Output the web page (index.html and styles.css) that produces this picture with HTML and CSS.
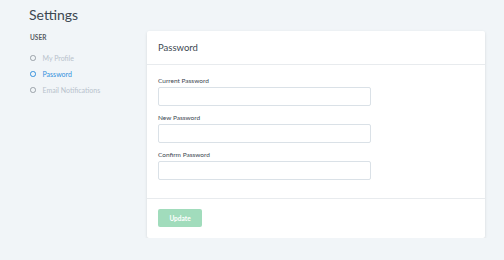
FILE: index.html
```html
<!DOCTYPE html>
<html>
<head>
<meta charset="utf-8">
<link rel="stylesheet" href="styles.css">
</head>
<body>
<div class="page">
  <aside class="sidebar">
    <h1 class="title">Settings</h1>
    <div class="section">USER</div>
    <ul class="nav">
      <li class="nav-item"><span class="radio"></span>My Profile</li>
      <li class="nav-item active"><span class="radio"></span>Password</li>
      <li class="nav-item"><span class="radio"></span>Email Notifications</li>
    </ul>
  </aside>
  <main class="card">
    <div class="card-header">Password</div>
    <div class="card-body">
      <label class="field">
        <span class="label">Current Password</span>
        <input class="input" type="password">
      </label>
      <label class="field">
        <span class="label">New Password</span>
        <input class="input" type="password">
      </label>
      <label class="field">
        <span class="label">Confirm Password</span>
        <input class="input" type="password">
      </label>
    </div>
    <div class="card-footer">
      <button class="btn">Update</button>
    </div>
  </main>
</div>
</body>
</html>
```
FILE: styles.css
```css
html, body {
  margin: 0;
  padding: 0;
  background: #f1f5f8;
  font-family: Lato, "Open Sans", sans-serif;
  color: #3d4852;
}
.page {
  display: flex;
  padding: 6px 19px 0 29px;
}
.sidebar {
  width: 118px;
  flex: none;
}
.title {
  margin: 0;
  font-size: 14px;
  font-weight: 400;
  line-height: 18px;
  color: #3d4852;
}
.section {
  margin-top: 9px;
  margin-left: 1px;
  font-size: 6.5px;
  font-weight: 700;
  color: #555b63;
  line-height: 10px;
}
.nav {
  list-style: none;
  margin: 7px 0 0;
  padding: 0;
}
.nav-item {
  display: flex;
  align-items: center;
  height: 16px;
  font-size: 7px;
  color: #b8c2cc;
}
.radio {
  width: 3.5px;
  height: 3.5px;
  border: 1.6px solid #9aa1a8;
  border-radius: 50%;
  margin: 0 7px 0 1px;
  flex: none;
}
.nav-item.active {
  color: #3490dc;
}
.nav-item.active .radio {
  border-color: #3490dc;
}
.card {
  margin-top: 25px;
  width: 338px;
  background: #fff;
  border-radius: 2px;
  box-shadow: 0 1px 3px rgba(0,0,0,0.12);
  align-self: flex-start;
}
.card-header {
  height: 33px;
  padding: 0 11px;
  display: flex;
  align-items: center;
  font-size: 9.5px;
  color: #3d4852;
  border-bottom: 1px solid #e8ebee;
}
.card-body {
  padding: 12px 11px 18px;
  display: flex;
  flex-direction: column;
  gap: 8px;
}
.field {
  display: flex;
  flex-direction: column;
  gap: 2px;
}
.label {
  font-size: 6.5px;
  line-height: 8px;
  color: #3d4852;
}
.input {
  width: 213px;
  height: 19px;
  box-sizing: border-box;
  border: 1px solid #dae1e7;
  border-radius: 2px;
  margin: 0;
  padding: 0 4px;
  background: #fff;
}
.card-footer {
  border-top: 1px solid #e8ebee;
  padding: 10px 11px 11px;
  display: flex;
}
.btn {
  width: 44px;
  height: 18px;
  border: none;
  border-radius: 2px;
  background: #a1dcbc;
  color: #fff;
  font-family: inherit;
  font-size: 6.5px;
  font-weight: 700;
  padding: 0;
}
```
